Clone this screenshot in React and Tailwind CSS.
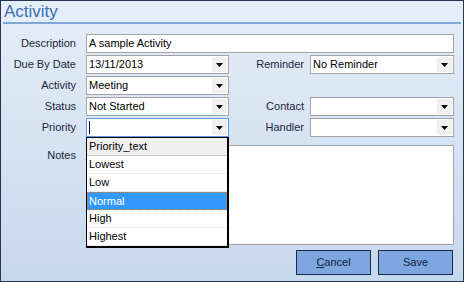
import React from "react";

const font = { fontFamily: '"Liberation Sans", Arial, sans-serif' };

function Arrow() {
  return (
    <div className="m-[1px] flex w-[15px] items-center justify-center bg-[#f0f0f0]">
      <svg width="7" height="4" viewBox="0 0 7 4">
        <path d="M0 0h7L3.5 4z" fill="#000" />
      </svg>
    </div>
  );
}

function Combo({ value, width, focused, children }) {
  return (
    <div
      className={`relative flex h-[19px] bg-white ${width} border ${
        focused ? "border-[#5c9de0]" : "border-[#a3a3a3]"
      }`}
    >
      <div className="flex flex-1 items-center pl-[2px] text-[11px] leading-none text-black">
        {focused ? <span className="h-[13px] w-[1px] bg-black" /> : value}
      </div>
      <Arrow />
      {children}
    </div>
  );
}

function Label({ text, width = "w-[75px]" }) {
  return (
    <div className={`${width} text-right text-[11px] leading-[19px] text-[#1b2638]`}>
      {text}
    </div>
  );
}

function PriorityList() {
  const items = ["Lowest", "Low", "Normal", "High", "Highest"];
  return (
    <div className="absolute left-[-1px] top-[18px] z-10 w-[143px] border border-r-2 border-b-2 border-black bg-white">
      <div className="flex h-[18px] items-center border-b border-[#c8c8c8] bg-[#f0f0f0] pl-[2px] text-[11px]">
        Priority_text
      </div>
      {items.map((item) => (
        <div
          key={item}
          className={
            item === "Normal"
              ? "flex h-[18px] items-center border border-dotted border-[#e07b2a] bg-[#3399ff] pl-[1px] text-[11px] text-white"
              : "flex h-[18px] items-center border-b border-[#ececec] pl-[2px] text-[11px] text-black"
          }
        >
          {item}
        </div>
      ))}
    </div>
  );
}

export default function App() {
  return (
    <div
      className="flex h-[282px] w-[464px] flex-col border border-[#26364c] bg-gradient-to-b from-[#e6eef8] to-[#c6d8ee]"
      style={font}
    >
      <div className="h-[21px] pl-[3px] pt-[1px] text-[17px] leading-[20px] text-[#3a6fb3]">
        Activity
      </div>
      <div className="mx-[2px] h-[2px] bg-[#7ea8d6]" />

      <div className="flex flex-col gap-[2px] pt-[10px]">
        <div className="flex items-center">
          <Label text="Description" />
          <div className="ml-[10px] flex h-[19px] w-[368px] items-center border border-[#a3a3a3] bg-white pl-[2px] text-[11px] text-black">
            A sample Activity
          </div>
        </div>

        <div className="flex items-center">
          <Label text="Due By Date" />
          <div className="ml-[10px]">
            <Combo value="13/11/2013" width="w-[143px]" />
          </div>
          <Label text="Reminder" />
          <div className="ml-[6px]">
            <Combo value="No Reminder" width="w-[144px]" />
          </div>
        </div>

        <div className="flex items-center">
          <Label text="Activity" />
          <div className="ml-[10px]">
            <Combo value="Meeting" width="w-[143px]" />
          </div>
        </div>

        <div className="flex items-center">
          <Label text="Status" />
          <div className="ml-[10px]">
            <Combo value="Not Started" width="w-[143px]" />
          </div>
          <Label text="Contact" />
          <div className="ml-[6px]">
            <Combo value="" width="w-[144px]" />
          </div>
        </div>

        <div className="flex items-start">
          <Label text="Priority" />
          <div className="ml-[10px]">
            <Combo value="" width="w-[143px]" focused>
              <PriorityList />
            </Combo>
          </div>
          <Label text="Handler" />
          <div className="ml-[6px]">
            <Combo value="" width="w-[144px]" />
          </div>
        </div>

        <div className="mt-[6px] flex items-start">
          <div className="w-[75px] pt-[4px] text-right text-[11px] leading-[13px] text-[#1b2638]">
            Notes
          </div>
          <div className="ml-[10px] h-[100px] w-[368px] border border-[#a3a3a3] bg-white" />
        </div>
      </div>

      <div className="mt-[5px] flex justify-end gap-[7px] pr-[10px]">
        <button className="h-[25px] w-[75px] border border-[#1c2b45] bg-[#7ea6e0] text-[11px] text-[#10203a]">
          <span className="underline">C</span>ancel
        </button>
        <button className="h-[25px] w-[75px] border border-[#1c2b45] bg-[#7ea6e0] text-[11px] text-[#10203a]">
          Save
        </button>
      </div>
    </div>
  );
}
